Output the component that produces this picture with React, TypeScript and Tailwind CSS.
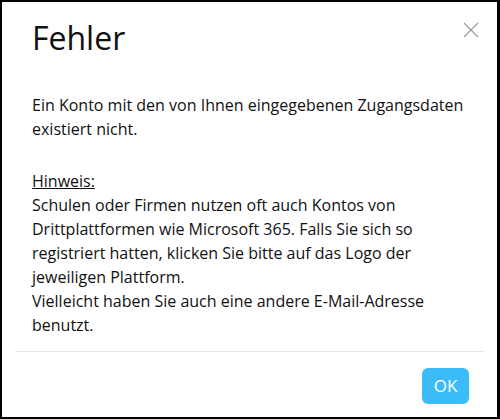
export default function App() {
  return (
    <div
      className="w-[500px] h-[419px] bg-white border-t-2 border-l-2 border-b-2 border-r-[3px] border-black flex flex-col text-[#222]"
      style={{ fontFamily: '"Open Sans", sans-serif' }}
    >
      <div className="relative pt-[14px] px-[30px]">
        <h1 className="text-[32px] leading-[44px] font-normal text-[#111]">Fehler</h1>
        <button className="absolute right-[18px] top-[20px] w-[16px] h-[16px] text-[#999]">
          <svg viewBox="0 0 16 16" width="16" height="16" fill="none" stroke="currentColor" strokeWidth="1.1">
            <path d="M1 1L15 15M15 1L1 15" />
          </svg>
        </button>
      </div>
      <div className="px-[30px] pt-[33px] text-[16px] leading-[24px] text-[#111]">
        <p>Ein Konto mit den von Ihnen eingegebenen Zugangsdaten existiert nicht.</p>
        <p className="mt-[28px]">
          <span className="underline">Hinweis:</span>
          <br />
          Schulen oder Firmen nutzen oft auch Kontos von Drittplattformen wie Microsoft 365. Falls Sie sich so
          registriert hatten, klicken Sie bitte auf das Logo der jeweiligen Plattform.
          <br />
          Vielleicht haben Sie auch eine andere E-Mail-Adresse benutzt.
        </p>
      </div>
      <div className="mx-[13px] mt-[14px] border-t border-[#e5e5e5]" />
      <div className="flex justify-end px-[28px] pt-[16px]">
        <button className="w-[47px] h-[36px] rounded-[6px] bg-[#3bbcf8] text-white text-[17px]">OK</button>
      </div>
    </div>
  );
}
